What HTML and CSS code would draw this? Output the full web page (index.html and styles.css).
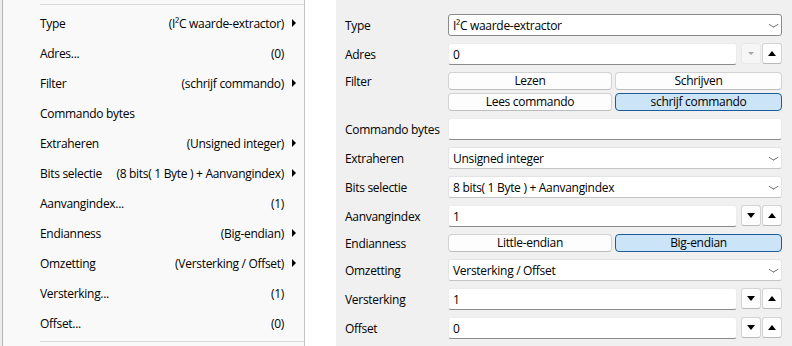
FILE: index.html
```html
<!DOCTYPE html>
<html lang="nl">
<head>
    <meta charset="UTF-8">
    <meta name="viewport" content="width=device-width, initial-scale=1.0">
    <title>I²C waarde-extractor</title>
    <link rel="stylesheet" href="styles.css">
</head>
<body>
    <div class="screen">
        <div class="edge"></div>
        <div class="menu">
            <div class="sep"></div>
            <div class="item"><span class="name">Type</span><span class="value">(I²C waarde-extractor)</span><span class="sub"></span></div>
            <div class="item"><span class="name">Adres...</span><span class="value">(0)</span><span class="nosub"></span></div>
            <div class="item"><span class="name">Filter</span><span class="value">(schrijf commando)</span><span class="sub"></span></div>
            <div class="item"><span class="name">Commando bytes</span><span class="value"></span><span class="nosub"></span></div>
            <div class="item"><span class="name">Extraheren</span><span class="value">(Unsigned integer)</span><span class="sub"></span></div>
            <div class="item"><span class="name">Bits selectie</span><span class="value">(8 bits( 1 Byte ) + Aanvangindex)</span><span class="sub"></span></div>
            <div class="item"><span class="name">Aanvangindex...</span><span class="value">(1)</span><span class="nosub"></span></div>
            <div class="item"><span class="name">Endianness</span><span class="value">(Big-endian)</span><span class="sub"></span></div>
            <div class="item"><span class="name">Omzetting</span><span class="value">(Versterking / Offset)</span><span class="sub"></span></div>
            <div class="item"><span class="name">Versterking...</span><span class="value">(1)</span><span class="nosub"></span></div>
            <div class="item"><span class="name">Offset...</span><span class="value">(0)</span><span class="nosub"></span></div>
            <div class="sep"></div>
        </div>
        <div class="gap"></div>
        <div class="panel">
            <div class="label">Type</div>
            <div class="select hover">I²C waarde-extractor<span class="chevron"></span></div>

            <div class="label">Adres</div>
            <div class="spin-row">
                <div class="input">0</div>
                <div class="spin disabled"><span class="down"></span></div>
                <div class="spin"><span class="up"></span></div>
            </div>

            <div class="label short">Filter</div>
            <div class="toggles">
                <div class="toggle">Lezen</div>
                <div class="toggle">Schrijven</div>
                <div class="toggle">Lees commando</div>
                <div class="toggle on">schrijf commando</div>
            </div>

            <div class="label">Commando bytes</div>
            <div class="input"></div>

            <div class="label">Extraheren</div>
            <div class="select">Unsigned integer<span class="chevron"></span></div>

            <div class="label">Bits selectie</div>
            <div class="select">8 bits( 1 Byte ) + Aanvangindex<span class="chevron"></span></div>

            <div class="label">Aanvangindex</div>
            <div class="spin-row">
                <div class="input">1</div>
                <div class="spin"><span class="down"></span></div>
                <div class="spin"><span class="up"></span></div>
            </div>

            <div class="label short">Endianness</div>
            <div class="toggles">
                <div class="toggle">Little-endian</div>
                <div class="toggle on">Big-endian</div>
            </div>

            <div class="label">Omzetting</div>
            <div class="select">Versterking / Offset<span class="chevron"></span></div>

            <div class="label">Versterking</div>
            <div class="spin-row">
                <div class="input">1</div>
                <div class="spin"><span class="down"></span></div>
                <div class="spin"><span class="up"></span></div>
            </div>

            <div class="label">Offset</div>
            <div class="spin-row">
                <div class="input">0</div>
                <div class="spin"><span class="down"></span></div>
                <div class="spin"><span class="up"></span></div>
            </div>
        </div>
    </div>
</body>
</html>
```

FILE: styles.css
```css
html, body {
    margin: 0;
    padding: 0;
    background-color: #ffffff;
}
body {
    font-family: "Open Sans", "Noto Sans", sans-serif;
    font-size: 12px;
    letter-spacing: -0.3px;
    color: #000;
}
.screen {
    display: flex;
    width: 792px;
    height: 346px;
    overflow: hidden;
}
.edge {
    width: 2px;
    background-color: #eeeeee;
}

/* context menu */
.menu {
    width: 301px;
    padding-top: 4px;
    background-color: #f9f9f9;
    border-left: 1px solid #b4b4b4;
    border-right: 1px solid #c4c4c4;
}
.sep {
    height: 1px;
    margin-left: 37px;
    background-color: #d9d9d9;
}
.menu .sep:first-child {
    margin-bottom: 3px;
}
.menu .sep:last-child {
    margin-top: 3px;
}
.item {
    display: flex;
    align-items: center;
    height: 30px;
    padding-left: 37px;
    padding-top: 1px;
    box-sizing: border-box;
}
.item .name {
    flex: 1;
}
.item .value {
    text-align: right;
}
.item .sub, .item .nosub {
    width: 20px;
    height: 29px;
    position: relative;
}
.item .sub::after {
    content: "";
    position: absolute;
    left: 8px;
    top: 10px;
    border-top: 4px solid transparent;
    border-bottom: 4px solid transparent;
    border-left: 4px solid #000;
}

.gap {
    width: 31px;
    background-color: #ffffff;
}

/* form panel */
.panel {
    flex: 1;
    background-color: #f0f0f0;
    padding: 14px 10px 0 9px;
    display: grid;
    grid-template-columns: 103px 1fr;
    grid-auto-rows: min-content;
    row-gap: 7px;
}
.label {
    height: 22px;
    line-height: 23px;
    white-space: nowrap;
}
.label.short {
    height: 18px;
    line-height: 20px;
}
.select, .input {
    box-sizing: border-box;
    height: 22px;
    display: flex;
    align-items: center;
    padding-left: 4px;
    background-color: #fff;
    border: 1px solid #e3e3e3;
    border-radius: 3px;
    position: relative;
}
.select {
    border-bottom-color: #c4c4c4;
}
.select.hover {
    border-color: #8a8a8a;
}
.input {
    flex: 1;
    border-color: #ececec;
    border-bottom-color: #8b8b8b;
}
.chevron {
    position: absolute;
    right: 4px;
    top: 6px;
    width: 6px;
    height: 6px;
    border-right: 1px solid #6b6b6b;
    border-bottom: 1px solid #6b6b6b;
    transform: scale(1, 0.6) rotate(45deg);
}
.spin-row {
    display: flex;
    align-items: flex-start;
}
.spin-row .input {
    margin-right: 3px;
}
.spin {
    box-sizing: border-box;
    width: 20px;
    height: 21px;
    margin-left: 1px;
    background-color: #fdfdfd;
    border: 1px solid #d4d4d4;
    border-bottom-color: #b8b8b8;
    border-radius: 3px;
    display: flex;
    justify-content: center;
    align-items: center;
}
.spin.disabled {
    background-color: #f6f6f6;
    border-color: #e8e8e8;
}
.up {
    border-left: 4px solid transparent;
    border-right: 4px solid transparent;
    border-bottom: 5px solid #000;
}
.down {
    border-left: 4px solid transparent;
    border-right: 4px solid transparent;
    border-top: 5px solid #000;
}
.spin.disabled .down {
    border-left-width: 3px;
    border-right-width: 3px;
    border-top: 3px solid #a6a6a6;
}
.toggles {
    display: grid;
    grid-template-columns: 164px 1fr;
    gap: 3px;
}
.toggle {
    box-sizing: border-box;
    height: 18px;
    line-height: 16px;
    text-align: center;
    background-color: #fdfdfd;
    border: 1px solid #d2d2d2;
    border-bottom-color: #bdbdbd;
    border-radius: 4px;
}
.toggle.on {
    background-color: #cce4f7;
    border-color: #1c5d99;
}
```
